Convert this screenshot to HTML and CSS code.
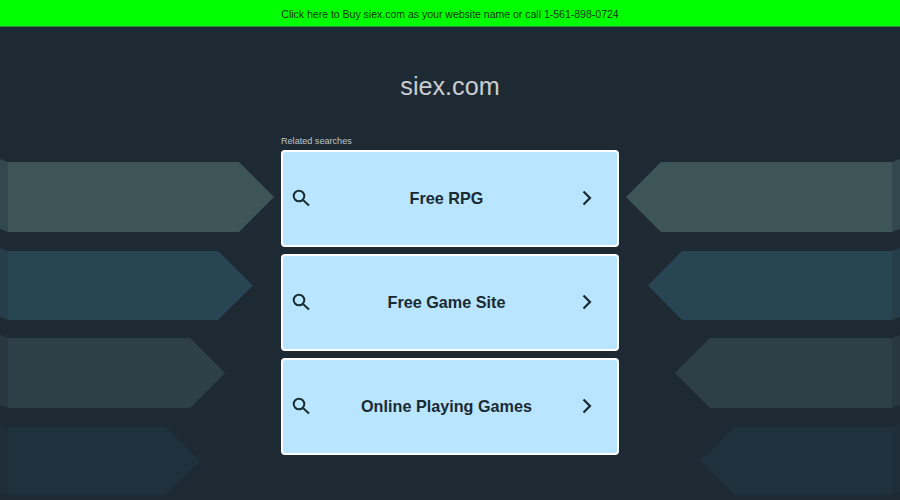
FILE: index.html
```html
<!DOCTYPE html>
<html lang="en">
<head>
<meta charset="utf-8">
<title>siex.com</title>
<link rel="stylesheet" href="styles.css">
</head>
<body>
<svg class="backdrop" viewBox="0 0 900 500" width="900" height="500" aria-hidden="true">
  <g class="c1">
    <path class="side" d="M0 159 8 162V232L0 229Z"/><path d="M8 162H239L274 197 239 232H8Z"/>
    <path class="side" d="M900 159 892 162V232L900 229Z"/><path d="M892 162H661L626 197 661 232H892Z"/>
  </g>
  <g class="c2">
    <path class="side" d="M0 248 8 251V320L0 317Z"/><path d="M8 251H218L253 285.500 218 320H8Z"/>
    <path class="side" d="M900 248 892 251V320L900 317Z"/><path d="M892 251H682L648 285.500 682 320H892Z"/>
  </g>
  <g class="c3">
    <path class="side" d="M0 335 8 338V408L0 405Z"/><path d="M8 338H190L225 373 190 408H8Z"/>
    <path class="side" d="M900 335 892 338V408L900 405Z"/><path d="M892 338H710L675 373 710 408H892Z"/>
  </g>
  <g class="c4">
    <path class="side" d="M0 424 8 427V495L0 492Z"/><path d="M8 427H165L200 461 165 495H8Z"/>
    <path class="side" d="M900 424 892 427V495L900 492Z"/><path d="M892 427H735L700 461 735 495H892Z"/>
  </g>
</svg>
<a class="banner" href="#">Click here to Buy siex.com as your website name or call 1-561-898-0724</a>
<main class="content">
  <h1 class="domain">siex.com</h1>
  <section class="results">
    <p class="label">Related searches</p>
    <ul class="list">
      <li><a class="card" href="#">
        <svg class="icon" viewBox="0 0 18 18"><circle cx="7" cy="7" r="5.3"/><path d="M11 11l6 5.6"/></svg>
        <span class="term">Free RPG</span>
        <svg class="icon chev" viewBox="0 0 18 18"><path d="M5.5 2.5 12 9l-6.500 6.500"/></svg>
      </a></li>
      <li><a class="card" href="#">
        <svg class="icon" viewBox="0 0 18 18"><circle cx="7" cy="7" r="5.3"/><path d="M11 11l6 5.6"/></svg>
        <span class="term">Free Game Site</span>
        <svg class="icon chev" viewBox="0 0 18 18"><path d="M5.5 2.5 12 9l-6.500 6.500"/></svg>
      </a></li>
      <li><a class="card" href="#">
        <svg class="icon" viewBox="0 0 18 18"><circle cx="7" cy="7" r="5.3"/><path d="M11 11l6 5.6"/></svg>
        <span class="term">Online Playing Games</span>
        <svg class="icon chev" viewBox="0 0 18 18"><path d="M5.5 2.5 12 9l-6.500 6.500"/></svg>
      </a></li>
    </ul>
  </section>
</main>
</body>
</html>
```

FILE: styles.css
```css
* { box-sizing: border-box; }
html, body { margin: 0; height: 100%; }
body {
  position: relative;
  width: 900px;
  height: 500px;
  overflow: hidden;
  background: #1e2a33;
  font-family: "Liberation Sans", Arial, sans-serif;
}
.backdrop { position: absolute; left: 0; top: 0; }
.c1 path { fill: #3e5558; }
.c1 .side { fill: #33484e; }
.c2 path { fill: #284554; }
.c2 .side { fill: #263d4a; }
.c3 path { fill: #2e4047; }
.c3 .side { fill: #29383f; }
.c4 path { fill: #20313e; }
.c4 .side { fill: #1f2d38; }
.banner {
  position: relative;
  display: block;
  height: 27px;
  background: #00ff00;
  border-bottom: 1px solid #2f8a2f;
  color: #173317;
  font-size: 10.500px;
  line-height: 29px;
  text-align: center;
  text-decoration: none;
}
.content {
  position: relative;
  display: flex;
  flex-direction: column;
  align-items: center;
}
.domain {
  margin: 44px 0 0;
  color: #c9cdd0;
  font-size: 25.200px;
  font-weight: 400;
  line-height: 30px;
}
.results { width: 338px; margin-top: 35px; }
.label {
  margin: 0 0 4px;
  color: #c0c5c8;
  font-size: 9.100px;
  line-height: 10px;
}
.list {
  display: flex;
  flex-direction: column;
  gap: 7px;
  margin: 0;
  padding: 0;
  list-style: none;
}
.card {
  display: flex;
  align-items: center;
  height: 97px;
  padding: 0 21px 0 9px;
  background: #b9e5fe;
  border: 2px solid #fff;
  border-radius: 4px;
  color: #1a2a33;
  text-decoration: none;
}
.term {
  flex: 1;
  margin-left: 5px;
  font-size: 16.200px;
  font-weight: 700;
  text-align: center;
}
.icon {
  flex: none;
  width: 18px;
  height: 18px;
  margin-bottom: 2px;
  fill: none;
  stroke: #1a2a33;
  stroke-width: 2;
}
.chev { stroke-width: 2.200; }
```
